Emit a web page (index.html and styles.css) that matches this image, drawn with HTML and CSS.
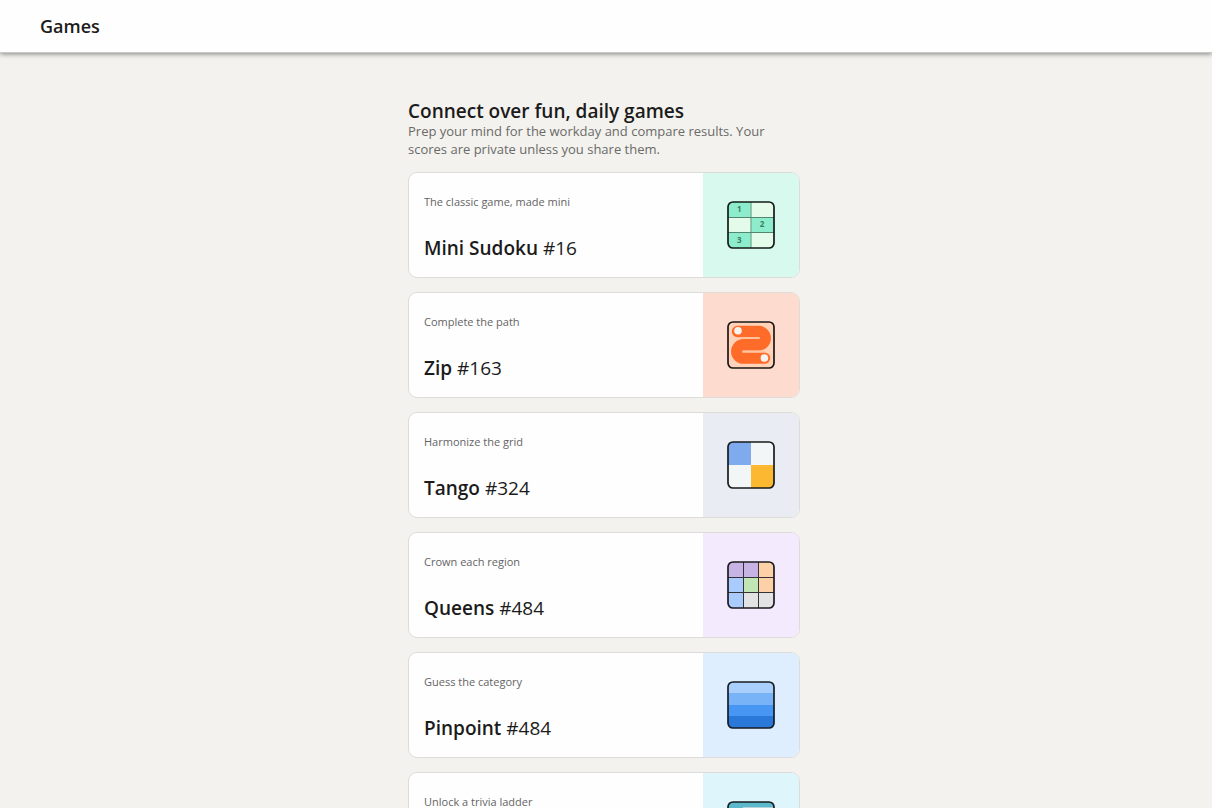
FILE: index.html
```html
<!DOCTYPE html>
<html lang="en">
<head>
<meta charset="utf-8">
<meta name="viewport" content="width=device-width, initial-scale=1">
<title>Games</title>
<link rel="stylesheet" href="styles.css">
</head>
<body>
<header class="topbar"><h1 class="topbar-title">Games</h1></header>
<main class="page">
  <div class="column">
    <section class="intro">
      <h2 class="intro-title">Connect over fun, daily games</h2>
      <p class="intro-text">Prep your mind for the workday and compare results. Your scores are private unless you share them.</p>
    </section>
    <nav class="games" aria-label="Daily games">
      <a class="card" href="#sudoku">
        <div class="card-body"><p class="card-tagline">The classic game, made mini</p><h3 class="card-title"><strong>Mini Sudoku</strong> #16</h3></div>
        <div class="card-art art-sudoku">
          <svg class="icon" viewBox="0 0 48 48" aria-hidden="true">
            <rect x="1" y="1" width="46" height="46" rx="5" fill="#e5fbea"/>
            <path d="M6 1H24V16H1V6a5 5 0 0 1 5-5zM24 16H47V31H24zM1 31H24V47H6a5 5 0 0 1-5-5z" fill="#8ceccb"/>
            <path d="M24 1V47" stroke="#79b197" stroke-width="1.4"/>
            <path d="M1 16.5H47M1 31.5H47" stroke="#53866e"/>
            <rect x="1" y="1" width="46" height="46" rx="5" fill="none" stroke="#131b18" stroke-width="1.7"/>
            <g class="digits"><text x="12.3" y="11">1</text><text x="35" y="26">2</text><text x="12.3" y="41.5">3</text></g>
          </svg>
        </div>
      </a>
      <a class="card" href="#zip">
        <div class="card-body"><p class="card-tagline">Complete the path</p><h3 class="card-title"><strong>Zip</strong> #163</h3></div>
        <div class="card-art art-zip">
          <svg class="icon" viewBox="0 0 48 48" aria-hidden="true">
            <rect x="1" y="1" width="46" height="46" rx="5" fill="#ffd2b9" stroke="#1b1714" stroke-width="1.7"/>
            <path d="M10.5 10.5H31.6a6.6 6.6 0 0 1 0 13.3H16.4a6.6 6.6 0 0 0 0 13.3H37.5" fill="none" stroke="#ff6c29" stroke-width="11.4" stroke-linecap="round" stroke-linejoin="round"/>
            <path d="M15 17.2H32M16 30.7H37" stroke="#ffc3a0" stroke-width="1.8" stroke-linecap="round"/>
            <circle cx="11" cy="9.8" r="3.8" fill="#f7f3ef"/><circle cx="37.4" cy="37" r="3.8" fill="#f7f3ef"/>
          </svg>
        </div>
      </a>
      <a class="card" href="#tango">
        <div class="card-body"><p class="card-tagline">Harmonize the grid</p><h3 class="card-title"><strong>Tango</strong> #324</h3></div>
        <div class="card-art art-tango">
          <svg class="icon" viewBox="0 0 48 48" aria-hidden="true">
            <rect x="1" y="1" width="46" height="46" rx="5" fill="#f3f6f6"/>
            <path d="M6 1H24V24H1V6a5 5 0 0 1 5-5z" fill="#7faaed"/>
            <path d="M24 24H47V42a5 5 0 0 1-5 5H24z" fill="#fdb831"/>
            <rect x="1" y="1" width="46" height="46" rx="5" fill="none" stroke="#171a19" stroke-width="1.7"/>
          </svg>
        </div>
      </a>
      <a class="card" href="#queens">
        <div class="card-body"><p class="card-tagline">Crown each region</p><h3 class="card-title"><strong>Queens</strong> #484</h3></div>
        <div class="card-art art-queens">
          <svg class="icon" viewBox="0 0 48 48" aria-hidden="true">
            <rect x="1" y="1" width="46" height="46" rx="5" fill="#e3e3e3"/>
            <path d="M6 1H32V16H1V6a5 5 0 0 1 5-5z" fill="#c7b4e5"/>
            <path d="M32 1H42a5 5 0 0 1 5 5V31H32z" fill="#fdd1a8"/>
            <path d="M1 16H17V47H6a5 5 0 0 1-5-5z" fill="#aacbfe"/>
            <path d="M17 16H32V31H17z" fill="#c1e5b3"/>
            <path d="M16.5 1V47M31.5 1V47M1 16.5H47M1 31.5H47" stroke="#333336"/>
            <rect x="1" y="1" width="46" height="46" rx="5" fill="none" stroke="#1c1a1e" stroke-width="1.7"/>
          </svg>
        </div>
      </a>
      <a class="card" href="#pinpoint">
        <div class="card-body"><p class="card-tagline">Guess the category</p><h3 class="card-title"><strong>Pinpoint</strong> #484</h3></div>
        <div class="card-art art-pinpoint">
          <svg class="icon" viewBox="0 0 48 48" aria-hidden="true">
            <rect x="1" y="1" width="46" height="46" rx="5" fill="#78b3f7"/>
            <path d="M6 1H42a5 5 0 0 1 5 5V12H1V6a5 5 0 0 1 5-5z" fill="#a9cffd"/>
            <path d="M1 24H47V35H1z" fill="#4896f4"/>
            <path d="M1 35H47V42a5 5 0 0 1-5 5H6a5 5 0 0 1-5-5z" fill="#2a78d9"/>
            <rect x="1" y="1" width="46" height="46" rx="5" fill="none" stroke="#171c20" stroke-width="1.7"/>
          </svg>
        </div>
      </a>
      <a class="card" href="#crossclimb">
        <div class="card-body"><p class="card-tagline">Unlock a trivia ladder</p><h3 class="card-title"><strong>Crossclimb</strong> #484</h3></div>
        <div class="card-art art-crossclimb">
          <svg class="icon" viewBox="0 0 48 48" aria-hidden="true">
            <rect x="1" y="1" width="46" height="46" rx="5" fill="#5bb9cb" stroke="#171c1e" stroke-width="1.7"/>
            <path d="M16 6H46V18H16zM2 18H32V30H2z" fill="#b5d3d8"/>
          </svg>
        </div>
      </a>
    </nav>
  </div>
</main>
</body>
</html>
```
FILE: styles.css
```css
* {
  box-sizing: border-box;
}

body {
  margin: 0;
  background: #f3f2ee;
  color: #1b1b1b;
  font-family: "Segoe UI", "Open Sans", "Noto Sans", sans-serif;
}

h1, h2, h3, p {
  margin: 0;
}

.topbar {
  padding: 12px 40px;
  border-bottom: 1px solid #c8c8c6;
  background: #fefefe;
  box-shadow: 0 1px 5px #808080;
}

.topbar-title {
  font-size: 18px;
  font-weight: 600;
  line-height: 28px;
}

.page {
  padding: 48px 4px 24px 0;
}

.column {
  max-width: 392px;
  margin: 0 auto;
}

.intro {
  margin-bottom: 14px;
}

.intro-title {
  font-size: 19px;
  font-weight: 600;
  line-height: 21px;
}

.intro-text {
  color: #6a6a68;
  font-size: 13px;
  line-height: 18px;
}

.games {
  display: flex;
  flex-direction: column;
  gap: 14px;
}

.card {
  display: flex;
  min-height: 106px;
  overflow: hidden;
  border: 1px solid #dddcd9;
  border-radius: 9px;
  background: #fefefe;
  color: inherit;
  text-decoration: none;
}

.card-body {
  display: flex;
  flex: 1;
  flex-direction: column;
  justify-content: space-between;
  padding: 20px 15px 15px;
}

.card-tagline {
  color: #646464;
  font-size: 11px;
  line-height: 18px;
}

.card-title {
  font-size: 19px;
  font-weight: 400;
  line-height: 28px;
}

.card-title strong {
  font-weight: 600;
}

.card-art {
  display: flex;
  flex: 0 0 96px;
  align-items: center;
  justify-content: center;
}

.icon {
  width: 48px;
  height: 48px;
}

.digits {
  fill: #3c7a61;
  font-size: 8px;
  font-weight: 700;
  text-anchor: middle;
}

.art-sudoku {
  background: #d7f9ee;
}

.art-zip {
  background: #fddbce;
}

.art-tango {
  background: #e9ecf2;
}

.art-queens {
  background: #f3eafe;
}

.art-pinpoint {
  background: #dfeefe;
}

.art-crossclimb {
  background: #def6fb;
}
```
